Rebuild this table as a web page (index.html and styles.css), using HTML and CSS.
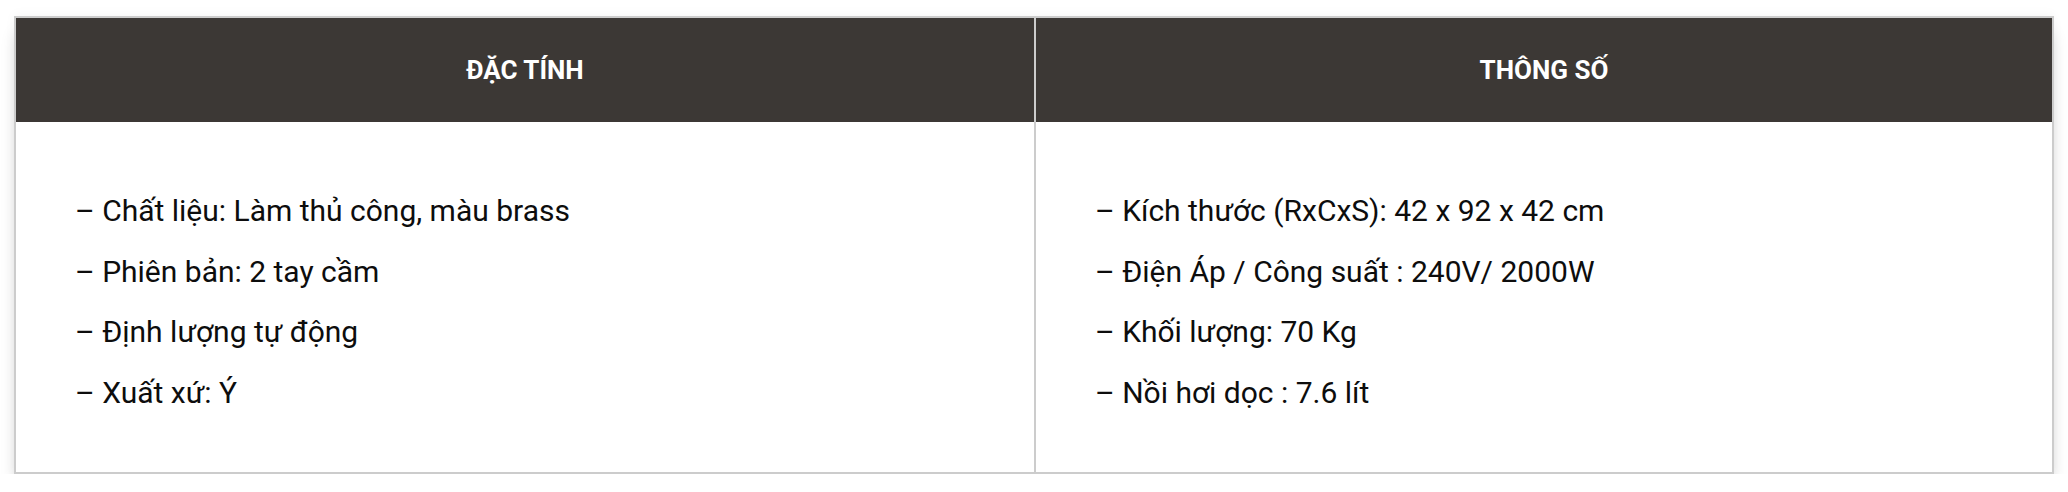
FILE: index.html
```html
<!DOCTYPE html>
<html lang="vi">
<head>
<meta charset="utf-8">
<link rel="stylesheet" href="styles.css">
</head>
<body>
<div class="spec">
  <div class="spec-col">
    <div class="spec-head">ĐẶC TÍNH</div>
    <div class="spec-body">
      <p>– Chất liệu: Làm thủ công, màu brass</p>
      <p>– Phiên bản: 2 tay cầm</p>
      <p>– Định lượng tự động</p>
      <p>– Xuất xứ: Ý</p>
    </div>
  </div>
  <div class="spec-col">
    <div class="spec-head">THÔNG SỐ</div>
    <div class="spec-body">
      <p>– Kích thước (RxCxS): 42 x 92 x 42 cm</p>
      <p>– Điện Áp / Công suất : 240V/ 2000W</p>
      <p>– Khối lượng: 70 Kg</p>
      <p>– Nồi hơi dọc : 7.6 lít</p>
    </div>
  </div>
</div>
</body>
</html>
```

FILE: styles.css
```css
html, body {
  margin: 0;
  padding: 0;
  background: #ffffff;
}
body {
  padding: 16px 14px 0 14px;
  font-family: Roboto, "Liberation Sans", Arial, sans-serif;
}
.spec {
  display: grid;
  grid-template-columns: 1fr 1fr;
  border: 2px solid #cccccc;
  box-shadow: 0 14px 16px -4px rgba(0, 0, 0, 0.2), 0 -2px 10px rgba(0, 0, 0, 0.04);
  background: #ffffff;
}
.spec-col + .spec-col {
  border-left: 2px solid #cccccc;
}
.spec-head {
  background: #3c3835;
  color: #ffffff;
  font-weight: 700;
  font-size: 26px;
  height: 104px;
  display: flex;
  align-items: center;
  justify-content: center;
}
.spec-body {
  padding: 59px 58px 49px 59px;
  color: #0d0d0d;
  font-size: 30px;
}
.spec-body p {
  margin: 0;
  line-height: 60.5px;
}
```
